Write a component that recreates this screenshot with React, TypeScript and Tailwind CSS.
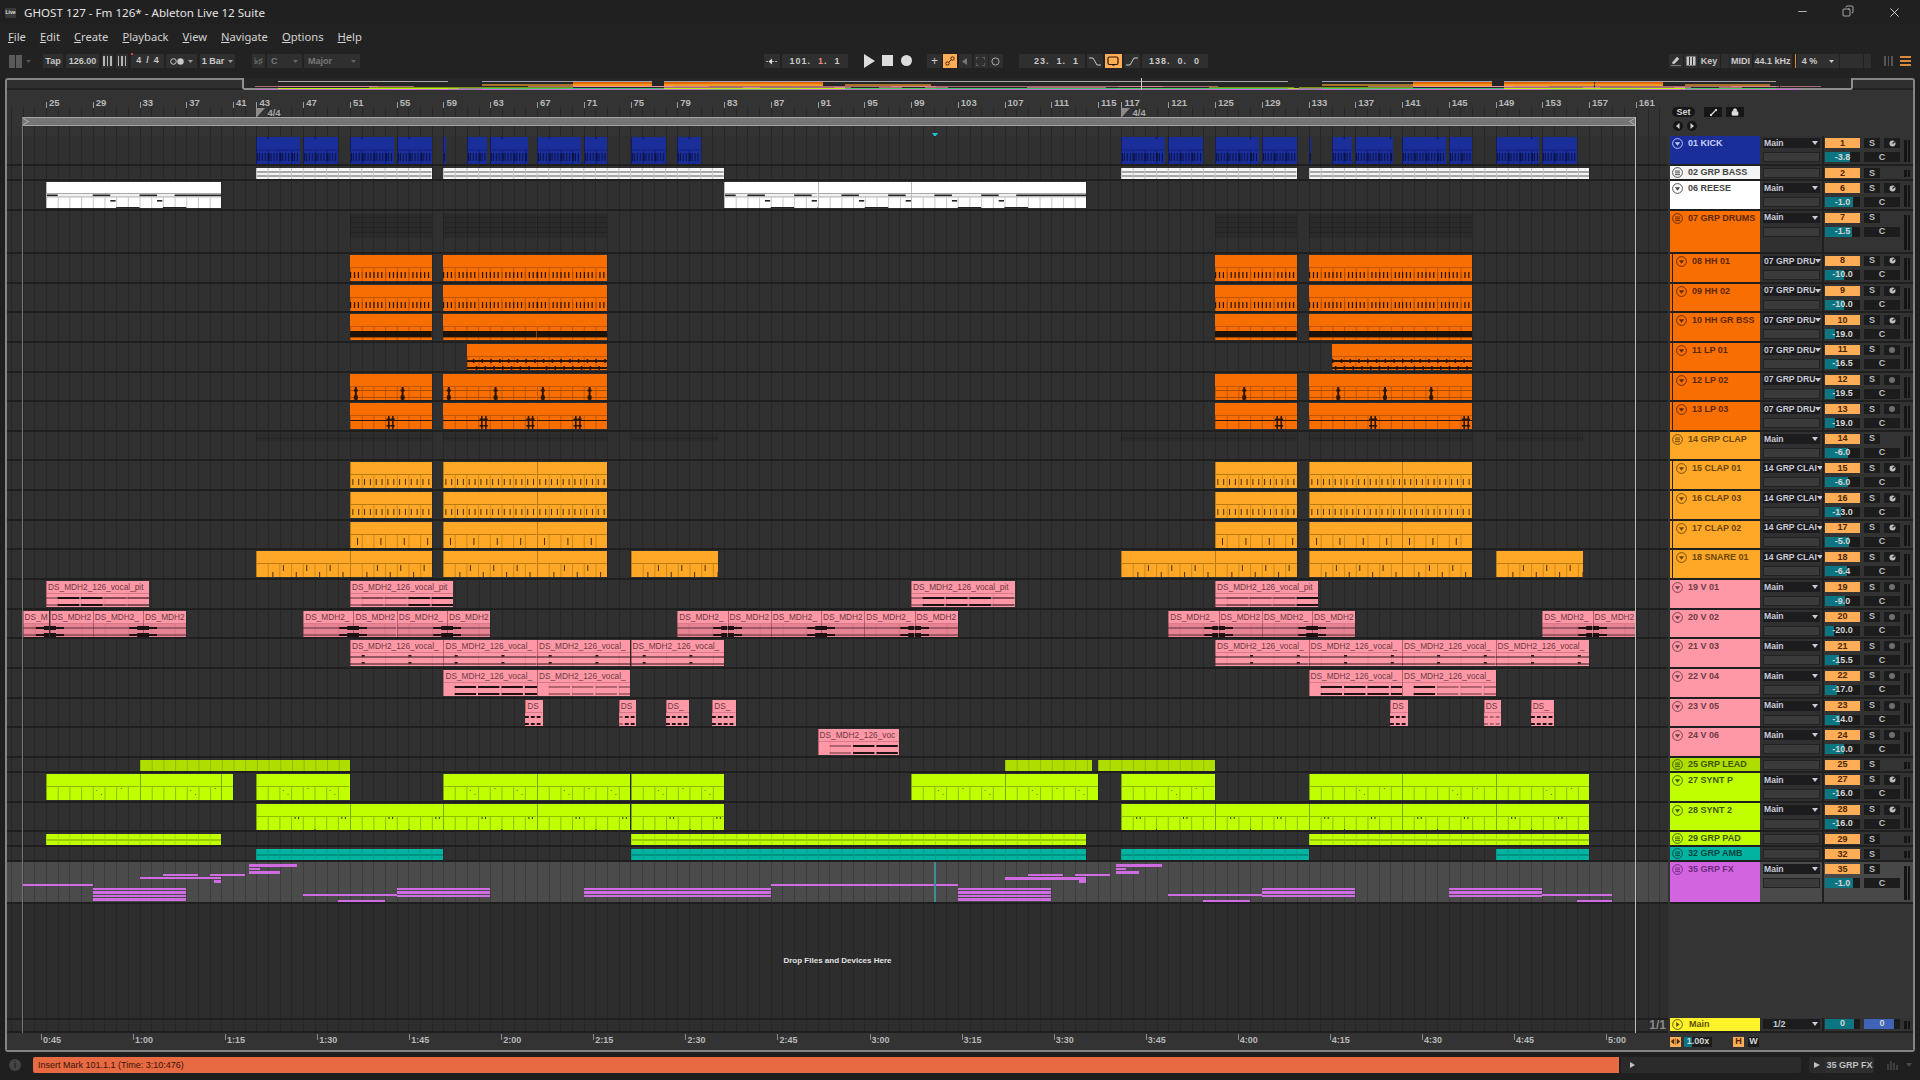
import type { ReactNode } from 'react'
import { Copy, Lock, Minus, X } from 'lucide-react'

// arrangement geometry, everything on the timeline is placed from bar numbers
const BAR = 11.69
const barX = (b: number) => 39 + (b - 25) * BAR
const miniX = (b: number) => 573 + (b - 51) * 11.35 - 7

type Seg = [number, number]
type FxClip = { a: number; b: number; y: number; n?: number }
type Track = {
  name: string
  h: number
  fill: string
  ink: string
  kind: string
  clips: Seg[]
  label?: string
  indent?: boolean
  group?: boolean
  route?: string
  vol?: number
  num: number
  arm?: 'dial' | 'dot'
  fx?: FxClip[]
}

const TALL = 29.65
const THIN = 15

const drumClips: Seg[] = [[51, 58], [59, 67], [67, 73], [125, 132], [133, 141], [141, 147]]
const ORANGE = 'bg-[#f86e00]'
const ORANGE_INK = 'text-[#5c2800]'
const AMBER = 'bg-[#ffa726]'
const AMBER_INK = 'text-[#6a4508]'
const PINK = 'bg-[#ff98a6]'
const PINK_INK = 'text-[#6e3a44]'
const LIME = 'bg-[#bfff00]'
const LIME_INK = 'text-[#3f5600]'

const fxClips: FxClip[] = [
  { a: 23, b: 29, y: 21.5 },
  { a: 29, b: 37, y: 25.5, n: 4 },
  { a: 33, b: 40, y: 14.5 },
  { a: 35, b: 38, y: 11.5 },
  { a: 39, b: 42, y: 11.5 },
  { a: 39.4, b: 40, y: 18 },
  { a: 42.4, b: 46.5, y: 2 },
  { a: 42.4, b: 43.3, y: 5.5 },
  { a: 42.4, b: 45, y: 9 },
  { a: 47, b: 55, y: 31.5 },
  { a: 50, b: 54, y: 38 },
  { a: 55, b: 63, y: 25.5, n: 3 },
  { a: 71, b: 87, y: 25.5, n: 3 },
  { a: 87, b: 103, y: 21.5 },
  { a: 103, b: 111, y: 25.5, n: 4 },
  { a: 109, b: 112, y: 11.5 },
  { a: 113, b: 116, y: 11.5 },
  { a: 107, b: 114, y: 15 },
  { a: 113.4, b: 114, y: 18 },
  { a: 116.5, b: 120.5, y: 2 },
  { a: 116.5, b: 117.4, y: 5.5 },
  { a: 116.5, b: 118.5, y: 9 },
  { a: 121, b: 129, y: 31.5 },
  { a: 124, b: 128, y: 38 },
  { a: 129, b: 137, y: 25.5, n: 3 },
  { a: 145, b: 153, y: 25.5, n: 3 },
  { a: 153, b: 159, y: 31.5 },
  { a: 156, b: 159, y: 38 },
]

const tracks: Track[] = [
  {
    name: '01 KICK', h: 30, fill: 'bg-[#1a2e99]', ink: 'text-[#c6d0f7]', kind: 'kick', num: 1, vol: -3.8, route: 'Main', arm: 'dial',
    clips: [[43, 46.75], [47, 50], [51, 54.75], [55, 58], [59, 59.25], [61, 62.75], [63, 66.25], [67, 70.75], [71, 73], [75, 78], [79, 81], [117, 120.75], [121, 124], [125, 128.75], [129, 132], [133, 133.25], [135, 136.75], [137, 140.25], [141, 144.75], [145, 147], [149, 152.75], [153, 156]],
  },
  { name: '02 GRP BASS', h: THIN, fill: 'bg-[#f4f4f4]', ink: 'text-[#444444]', kind: 'bass', num: 2, group: true, clips: [[43, 58], [59, 83], [117, 132], [133, 157]] },
  { name: '06 REESE', h: 29.6, fill: 'bg-[#ffffff]', ink: 'text-[#444444]', kind: 'reese', num: 6, vol: -1.0, route: 'Main', arm: 'dial', clips: [[25, 40], [83, 91], [91, 99], [99, 114]] },
  { name: '07 GRP DRUMS', h: 43.4, fill: ORANGE, ink: ORANGE_INK, kind: 'faint', num: 7, vol: -1.5, route: 'Main', group: true, clips: drumClips },
  { name: '08 HH 01', h: TALL, fill: ORANGE, ink: ORANGE_INK, kind: 'hh', num: 8, vol: -10.0, route: '07 GRP DRU', arm: 'dial', indent: true, clips: drumClips },
  { name: '09 HH 02', h: TALL, fill: ORANGE, ink: ORANGE_INK, kind: 'hh', num: 9, vol: -10.0, route: '07 GRP DRU', arm: 'dial', indent: true, clips: drumClips },
  { name: '10 HH GR BSS', h: TALL, fill: ORANGE, ink: ORANGE_INK, kind: 'band', num: 10, vol: -19.0, route: '07 GRP DRU', arm: 'dial', indent: true, clips: drumClips },
  { name: '11 LP 01', h: TALL, fill: ORANGE, ink: ORANGE_INK, kind: 'lp1', num: 11, vol: -16.5, route: '07 GRP DRU', arm: 'dot', indent: true, clips: [[61, 67], [67, 73], [135, 141], [141, 147]] },
  { name: '12 LP 02', h: TALL, fill: ORANGE, ink: ORANGE_INK, kind: 'lp2', num: 12, vol: -19.5, route: '07 GRP DRU', arm: 'dot', indent: true, clips: drumClips },
  { name: '13 LP 03', h: TALL, fill: ORANGE, ink: ORANGE_INK, kind: 'lp3', num: 13, vol: -19.0, route: '07 GRP DRU', arm: 'dot', indent: true, clips: drumClips },
  { name: '14 GRP CLAP', h: TALL, fill: AMBER, ink: AMBER_INK, kind: 'faint2', num: 14, vol: -6.0, route: 'Main', group: true, clips: [[43, 58], [59, 73], [75, 82.5], [117, 132], [133, 147], [149, 156.5]] },
  { name: '15 CLAP 01', h: TALL, fill: AMBER, ink: AMBER_INK, kind: 'clap', num: 15, vol: -6.0, route: '14 GRP CLAI', arm: 'dial', indent: true, clips: drumClips },
  { name: '16 CLAP 03', h: TALL, fill: AMBER, ink: AMBER_INK, kind: 'clap', num: 16, vol: -13.0, route: '14 GRP CLAI', arm: 'dial', indent: true, clips: drumClips },
  { name: '17 CLAP 02', h: TALL, fill: AMBER, ink: AMBER_INK, kind: 'clap2', num: 17, vol: -5.0, route: '14 GRP CLAI', arm: 'dial', indent: true, clips: drumClips },
  { name: '18 SNARE 01', h: TALL, fill: AMBER, ink: AMBER_INK, kind: 'snare', num: 18, vol: -6.4, route: '14 GRP CLAI', arm: 'dial', indent: true, clips: [[43, 51], [51, 58], [59, 67], [67, 73], [75, 82.5], [117, 125], [125, 132], [133, 141], [141, 147], [149, 156.5]] },
  { name: '19 V 01', h: TALL, fill: PINK, ink: PINK_INK, kind: 'v1', num: 19, vol: -9.0, route: 'Main', arm: 'dot', label: 'DS_MDH2_126_vocal_pitch', clips: [[25, 33.85], [51, 59.85], [99, 107.85], [125, 133.85]] },
  {
    name: '20 V 02', h: TALL, fill: PINK, ink: PINK_INK, kind: 'v2', num: 20, vol: -20.0, route: 'Main', arm: 'dot', label: 'DS_MDH2_126_vocal_pitch',
    clips: [[23, 25.3], [25.3, 29], [29, 33.3], [33.3, 37], [47, 51.3], [51.3, 55], [55, 59.3], [59.3, 63], [79, 83.3], [83.3, 87], [87, 91.3], [91.3, 95], [95, 99.3], [99.3, 103], [121, 125.3], [125.3, 129], [129, 133.3], [133.3, 137], [153, 157.3], [157.3, 161]],
  },
  { name: '21 V 03', h: TALL, fill: PINK, ink: PINK_INK, kind: 'v3', num: 21, vol: -15.5, route: 'Main', arm: 'dot', label: 'DS_MDH2_126_vocal_pitch', clips: [[51, 59], [59, 67], [67, 75], [75, 83], [125, 133], [133, 141], [141, 149], [149, 157]] },
  { name: '22 V 04', h: TALL, fill: PINK, ink: PINK_INK, kind: 'v4', num: 22, vol: -17.0, route: 'Main', arm: 'dot', label: 'DS_MDH2_126_vocal_hook', clips: [[59, 67], [67, 75], [133, 141], [141, 149]] },
  { name: '23 V 05', h: TALL, fill: PINK, ink: PINK_INK, kind: 'v5', num: 23, vol: -14.0, route: 'Main', arm: 'dot', label: 'DS_MDH2_126_vocal', clips: [[66, 67.5], [74, 75.5], [78, 80], [82, 84], [140, 141.5], [148, 149.5], [152, 154]] },
  { name: '24 V 06', h: TALL, fill: PINK, ink: PINK_INK, kind: 'v6', num: 24, vol: -10.0, route: 'Main', arm: 'dot', label: 'DS_MDH2_126_vocal', clips: [[91, 98]] },
  { name: '25 GRP LEAD', h: THIN, fill: 'bg-[#b0dd00]', ink: LIME_INK, kind: 'lead', num: 25, group: true, clips: [[33, 51], [107, 114.5], [115, 125]] },
  { name: '27 SYNT P', h: TALL, fill: LIME, ink: LIME_INK, kind: 'synth', num: 27, vol: -16.0, route: 'Main', arm: 'dial', clips: [[25, 33], [33, 40], [40, 41], [43, 51], [59, 67], [67, 75], [75, 83], [99, 107], [107, 115], [117, 125], [133, 141], [141, 149], [149, 157]] },
  { name: '28 SYNT 2', h: TALL, fill: LIME, ink: LIME_INK, kind: 'synth2', num: 28, vol: -16.0, route: 'Main', arm: 'dial', clips: [[43, 51], [51, 59], [59, 67], [67, 75], [75, 83], [117, 125], [125, 133], [133, 141], [141, 149], [149, 157]] },
  { name: '29 GRP PAD', h: THIN, fill: LIME, ink: LIME_INK, kind: 'pad', num: 29, group: true, clips: [[25, 40], [75, 114], [133, 157]] },
  { name: '32 GRP AMB', h: THIN, fill: 'bg-[#00b3a0]', ink: 'text-[#00443e]', kind: 'amb', num: 32, group: true, clips: [[43, 59], [75, 114], [117, 133], [149, 157]] },
  { name: '35 GRP FX', h: 42, fill: 'bg-[#d264e0]', ink: 'text-[#6e2a7c]', kind: 'fx', num: 35, vol: -1.0, route: 'Main', group: true, clips: [], fx: fxClips },
]

const topLabels: number[] = [25, 29, 33, 37, 41]
for (let b = 43; b <= 115; b += 4) topLabels.push(b)
for (let b = 117; b <= 161; b += 4) topLabels.push(b)

const timeLabels: string[] = []
for (let s = 45; s <= 300; s += 15) timeLabels.push(`${Math.floor(s / 60)}:${String(s % 60).padStart(2, '0')}`)

// how much of a clip name fits, capitals are wider than the rest at this size
function fitLabel(label: string, width: number) {
  let used = 2
  let out = ''
  for (const ch of label) {
    used += /[A-Z]/.test(ch) ? 6.3 : ch === 'l' || ch === 'i' || ch === 't' ? 2.4 : 4.6
    if (used > width) break
    out += ch
  }
  return out
}

function Wave({ kind, a, b, h }: { kind: string; a: number; b: number; h: number }) {
  const w = (b - a) * BAR
  const out: ReactNode[] = []
  const R = (x: number, y: number, rw: number, rh: number, c: string) => out.push(<rect key={out.length} x={x} y={y} width={rw} height={rh} fill={c} />)
  const at = (bar: number) => (bar - a) * BAR
  // loop over positions with a step, aligned to the whole song, not the clip
  const each = (step: number, fn: (bar: number) => void) => {
    for (let t = Math.ceil(a / step) * step; t < b; t += step) fn(t)
  }
  const grid = (y: number, c: string, step = 1) => each(step, (t) => R(at(t), y, 1, h - y, c))
  const edge = (c: string) => R(0, 0, 1, h, c)

  if (kind === 'kick') {
    R(0, 12.5, w, 1, '#141f7c')
    grid(13, '#131f78')
    each(0.25, (t) => R(at(t), 16, t % 1 === 0 ? 2 : 1, 8, '#0b1245'))
    each(4, (t) => R(at(t), 0, 1, 2, '#0b1245'))
    edge('#101a66')
  } else if (kind === 'bass') {
    R(0, 3.5, w, 1, '#5a5a5a')
    R(0, 7.5, w, 1, '#5a5a5a')
    grid(0, '#c4c4c4')
  } else if (kind === 'reese') {
    R(0, 11, w, 1, '#a9a9a9')
    R(0, 12, w, 2.4, '#f2f2f2')
    R(0, 14.4, w, 1, '#a9a9a9')
    grid(15, '#c8c8c8')
    each(4, (t) => {
      if ((t < 33 && t >= 25) || (t >= 83 && t < 107)) {
        R(at(t + 1), 12.5, 1.5 * BAR, 1.6, '#222222')
        R(at(t + 2.5), 18, 0.45 * BAR, 1.6, '#222222')
        R(at(t + 3), 25, 2 * BAR, 2, '#222222')
      } else {
        R(at(t), 12.5, 4 * BAR, 1.6, '#222222')
      }
    })
    if (a === 25 || a === 83) R(0, 12.5, BAR, 1.6, '#222222')
    edge('#bbbbbb')
  } else if (kind === 'faint' || kind === 'faint2') {
    const fh = kind === 'faint' ? 24 : 8
    R(0, kind === 'faint' ? 2 : 0, w, fh, kind === 'faint' ? 'rgba(0,0,0,0.12)' : 'rgba(0,0,0,0.07)')
    for (let y = 5; y < fh; y += 5) R(0, y, w, 1, 'rgba(0,0,0,0.14)')
  } else if (['hh', 'band', 'lp1', 'lp2', 'lp3'].includes(kind)) {
    R(0, 12, w, 1, '#c05700')
    grid(13, '#c05700')
    if (kind === 'hh') {
      each(1 / 3, (t) => R(at(t), 17, 1.2, 6, Math.round(t * 3) % 6 === 0 ? '#a84a00' : '#241200'))
    }
    if (kind === 'band') R(0, 17, w, 6.4, '#1c1209')
    if (kind === 'lp1') {
      R(0, 16, w, 2, '#2c1603')
      R(0, 23, w, 2, '#2c1603')
      each(0.75, (t) => {
        R(at(t), 15, 1.5, 4, '#241202')
        R(at(t + 0.25), 22, 1.5, 4, '#241202')
      })
    }
    if (kind === 'lp2') {
      R(0, 16, w, 1, '#a84c00')
      R(0, 23, w, 1, '#a84c00')
      each(4, (t) => {
        const x = at(t - 0.5)
        R(x - 1, 13, 2, 14, '#2a1603')
        R(x - 2, 15.5, 4, 2, '#2a1603')
        R(x - 2, 21.5, 4, 4, '#2a1603')
      })
    }
    if (kind === 'lp3') {
      R(0, 17, w, 1, '#2a1603')
      each(4, (t) => {
        for (const o of [2.25, 2.6]) {
          R(at(t + o), 13, 1.6, 13, '#2a1603')
          R(at(t + o - 0.12), 15.5, 4, 1.6, '#2a1603')
          R(at(t + o - 0.12), 22, 4, 1.6, '#2a1603')
        }
      })
    }
  } else if (['clap', 'clap2', 'snare'].includes(kind)) {
    R(0, 12, w, 1, '#b97a10')
    grid(13, '#c98a1c')
    if (kind === 'clap') each(0.5, (t) => R(at(t + 0.2), 17, 1, 6, '#4a2f00'))
    if (kind === 'clap2') each(1, (t) => t % 2 === 1 && R(at(t + 0.6), 16, 1, 7, '#4a2f00'))
    if (kind === 'snare')
      each(2, (t) => {
        R(at(t + 1.3), 14, 1, 6, '#4a2f00')
        R(at(t + 0.4), 21, 1, 6, '#4a2f00')
      })
    edge('#b97a10')
  } else if (kind.startsWith('v')) {
    R(0, 12, w, 1, '#d87a8a')
    edge('#b8606e')
    grid(13, '#ec8a99', 2)
    const y1 = 16
    const y2 = 23
    if (kind === 'v2') {
      R(0, 13, w, 14, 'rgba(110,40,55,0.18)')
      for (const y of [y1, y2]) {
        R(0, y + 0.5, w, 1, '#603038')
        if (a % 1 !== 0) {
          R(0, y, 14, 2, '#1f1013')
          R(0, y - 1, 6, 4, '#1f1013')
        }
        if (b % 1 !== 0) {
          R(w - 14, y, 14, 2, '#1f1013')
          R(w - 6, y - 1, 6, 4, '#1f1013')
        }
      }
    } else if (kind === 'v3') {
      R(0, y1 + 0.5, w, 1, '#2a1519')
      R(0, y2 + 0.5, w, 1, '#2a1519')
      each(4, (t) => {
        R(at(t), y1 - 1, 3, 1.6, '#2a1519')
        R(at(t), y2 - 1, 3, 1.6, '#2a1519')
      })
    } else {
      const span = kind === 'v5' ? 0.5 : 2
      if (kind === 'v1') {
        R(0, y1 + 0.5, w, 1, '#603038')
        R(0, y2 + 0.5, w, 1, '#603038')
      }
      each(span, (t) => {
        const seg = Math.sin(t * 12.9) > -0.4
        if (kind === 'v4' && Math.round(t) % 4 === 3) return
        if (seg) {
          R(at(t), y1, span * BAR - 2, 2, '#1f1013')
          R(at(t), y2, span * BAR - 2, 2, '#1f1013')
        } else {
          R(at(t), y1 + 0.5, span * BAR - 2, 1, '#603038')
          R(at(t), y2 + 0.5, span * BAR - 2, 1, '#603038')
        }
      })
    }
  } else if (kind === 'lead') {
    grid(0, '#92bd00')
  } else if (kind === 'synth' || kind === 'synth2') {
    R(0, 12, w, 1, '#8fbe00')
    grid(13, '#8fbe00')
    edge('#7ea800')
    if (kind === 'synth') each(4, (t) => {
      R(at(t + 1.3), 16, 1, 1, '#55720a')
      R(at(t + 1.7), 20, 1, 1, '#55720a')
      R(at(t + 3.4), 14, 1, 1, '#55720a')
    })
    else each(1, (t) => {
      if (t % 4 === 2) R(at(t + 0.3), 13, 1, 2, '#2d3b00')
      if (t % 4 === 2) R(at(t + 0.6), 13, 1, 2, '#2d3b00')
      if (t % 8 === 0) R(at(t), 25, 1, 2, '#2d3b00')
    })
  } else if (kind === 'pad') {
    R(0, 5.5, w, 1, '#7b9c00')
    grid(0, '#a4d800')
  } else if (kind === 'amb') {
    R(0, 5.5, w, 1, '#00746a')
    grid(0, '#009f8e')
  }

  return (
    <svg className="absolute left-0 top-0" width={w} height={h}>
      {out}
    </svg>
  )
}

function Clip({ t, seg }: { t: Track; seg: Seg }) {
  const [a, b] = seg
  const faint = t.kind === 'faint' || t.kind === 'faint2'
  const inner = t.kind === 'pad' || t.kind === 'amb' || t.kind === 'lead' ? 11 : t.kind === 'bass' ? 11 : Math.floor(t.h) - 3
  const width = (b - a) * BAR
  const shown = t.label ? fitLabel(t.label, width) : ''
  return (
    <div
      className={`absolute overflow-hidden ${faint ? '' : t.fill}`}
      style={{ left: barX(a), width, top: t.h === THIN ? 2 : 1, height: faint ? t.h - 3 : inner }}
    >
      <Wave kind={t.kind} a={a} b={b} h={inner} />
      {shown && (
        <span className="relative block whitespace-nowrap pl-[2px] pt-[1px] text-[8.3px] leading-[11px] text-[#6b3a44]">{shown}</span>
      )}
    </div>
  )
}

function FxStrip({ c }: { c: FxClip }) {
  const rows = Array.from({ length: c.n ?? 1 })
  return (
    <div className="absolute flex flex-col gap-[1px]" style={{ left: barX(c.a), width: (c.b - c.a) * BAR, top: c.y }}>
      {rows.map((_, i) => (
        <div key={i} className="h-[2.5px] bg-[#cf6ce2]" />
      ))}
    </div>
  )
}

function FoldIcon({ group, play }: { group?: boolean; play?: boolean }) {
  return (
    <svg width="11" height="11" viewBox="0 0 11 11" className="shrink-0">
      <circle cx="5.5" cy="5.5" r="4.9" fill="none" stroke="currentColor" strokeWidth="0.9" />
      {group ? (
        <path d="M3 4h5M3 5.8h5M3 7.6h5" stroke="currentColor" strokeWidth="0.9" />
      ) : play ? (
        <path d="M4.2 3l3.4 2.5L4.2 8z" fill="currentColor" />
      ) : (
        <path d="M2.9 4.2h5.2L5.5 7.8z" fill="currentColor" />
      )}
    </svg>
  )
}

function ArmButton({ kind }: { kind?: 'dial' | 'dot' }) {
  if (!kind) return <div className="h-[10px] w-[16px]" />
  return (
    <div className="flex h-[10px] w-[16px] items-center justify-center bg-[#1c1c1c]">
      {kind === 'dial' ? (
        <svg width="7" height="7" viewBox="0 0 7 7">
          <circle cx="3.5" cy="3.5" r="3" fill="#bdbdbd" />
          <path d="M3.5 3.5L6 1.6" stroke="#222" strokeWidth="1.2" />
        </svg>
      ) : (
        <div className="h-[6px] w-[6px] rounded-full bg-[#6f6f6f]" />
      )}
    </div>
  )
}

function VolBar({ value, width = 'w-[35px]' }: { value: number; width?: string }) {
  const pct = Math.max(20, 82 + value * 2.8)
  return (
    <div className={`relative flex h-[10px] items-center justify-center bg-[#1b1b1b] text-[9px] font-bold leading-none text-[#d6d6d6] ${width}`}>
      <div className="absolute inset-y-0 left-0 bg-[#0b7582]" style={{ width: `${pct}%` }} />
      <span className="relative">{value.toFixed(1)}</span>
    </div>
  )
}

function Meter() {
  return (
    <div className="ml-[4px] mb-[2px] mt-[2px] flex w-[6px] gap-[1px]">
      <div className="flex-1 bg-[#141414]" />
      <div className="flex-1 bg-[#141414]" />
    </div>
  )
}

function Header({ t }: { t: Track }) {
  const selected = t.kind === 'fx'
  const tall = t.h !== THIN
  return (
    <>
      <div className={`ml-[2px] flex w-[90px] border-b-2 border-[#1f1f1f] ${t.indent ? 'bg-[#202020]' : ''}`}>
        {t.indent && <div className={`mr-[1px] w-[2px] ${t.fill}`} />}
        <div className={`flex flex-1 gap-[5px] ${t.fill} ${t.ink} ${tall ? 'pt-[2px]' : 'items-center'} ${t.indent ? 'pl-[3px]' : 'pl-[2px]'}`}>
          <FoldIcon group={t.group} />
          <span className="whitespace-nowrap text-[9px] font-bold leading-[11px]">{t.name}</span>
        </div>
      </div>
      <div className={`flex w-[62px] flex-col gap-[4px] border-b-2 border-[#1f1f1f] pl-[3px] pt-[2px] ${selected ? 'bg-[#4a4a4a]' : 'bg-[#303030]'}`}>
        {t.route && (
          <div className="flex h-[10px] w-[57px] items-center justify-between bg-[#1c1c1e] pl-[1px] pr-[2px] text-[8.6px] font-bold leading-none text-[#c9cbd8]">
            <span className="whitespace-nowrap">{t.route}</span>
            <svg width="6" height="4" viewBox="0 0 6 4" className="shrink-0"><path d="M0 0h6L3 4z" fill="#c9cbd8" /></svg>
          </div>
        )}
        <div className="h-[10px] w-[57px] border border-[#222222] bg-[#3a3a3a]" />
      </div>
      <div className={`flex w-[91px] border-b-2 border-l-2 border-[#1f1f1f] pl-[1px] pt-[2px] ${selected ? 'bg-[#484848]' : 'bg-[#333333]'}`}>
        <div className="flex w-[75px] flex-col gap-[4px]">
          <div className="flex gap-[4px]">
            <div className="flex h-[10px] w-[35px] items-center justify-center bg-[#ffad56] text-[9px] font-bold leading-none text-[#4a2600]">{t.num}</div>
            <div className="flex h-[10px] w-[16px] items-center justify-center bg-[#1c1c1c] text-[9px] font-bold leading-none text-[#bdbdbd]">S</div>
            <ArmButton kind={t.arm} />
          </div>
          {t.vol !== undefined && (
            <div className="flex gap-[4px]">
              <VolBar value={t.vol} />
              <div className="flex h-[10px] w-[36px] items-center justify-center bg-[#1c1c1c] text-[9px] font-bold leading-none text-[#bdbdbd]">C</div>
            </div>
          )}
        </div>
        <Meter />
      </div>
    </>
  )
}

function TrackRow({ t }: { t: Track }) {
  const selected = t.kind === 'fx'
  return (
    <div className="flex" style={{ height: t.h }}>
      <div
        className={`relative w-[1661px] overflow-hidden border-b-2 border-[#1f1f1f] ${
          selected
            ? 'bg-[#4b4b4b] bg-[repeating-linear-gradient(90deg,transparent_0,transparent_3.93px,#3c3c3c_3.93px,#3c3c3c_4.93px,transparent_4.93px,transparent_11.69px)]'
            : 'bg-[#303030] bg-[repeating-linear-gradient(90deg,transparent_0,transparent_3.93px,#272727_3.93px,#272727_4.93px,transparent_4.93px,transparent_11.69px)]'
        }`}
      >
        {t.clips.map((c) => (
          <Clip key={c[0]} t={t} seg={c} />
        ))}
        {t.fx?.map((c) => (
          <FxStrip key={`${c.a}-${c.y}`} c={c} />
        ))}
        {selected && <div className="absolute inset-y-0 left-[926.7px] w-[2px] bg-[#3d8f96]" />}
      </div>
      <Header t={t} />
    </div>
  )
}

function Overview() {
  let y = 0
  const rows = tracks.map((t) => {
    const top = 1 + (y / 768) * 8
    y += t.h
    return { t, top }
  })
  return (
    <div className="relative h-[10px] shrink-0 border-b-2 border-[#222222] bg-[#2f2f2f]">
      <div className="absolute -top-[2px] left-[234.5px] h-[12px] w-[1611px] rounded-b-[3px] border-2 border-t-0 border-[#8f8f8f] bg-[#262626]" />
      {rows.map(({ t, top }) =>
        (t.fx ? t.fx.map((c) => [c.a, c.b] as Seg) : t.clips).map((c, i) => (
          <div
            key={`${t.num}-${i}`}
            className={`absolute h-[1px] opacity-60 ${t.fill}`}
            style={{ left: miniX(c[0]), width: (c[1] - c[0]) * 11.35, top }}
          />
        )),
      )}
      <div className="absolute -top-[2px] left-[1134px] h-[12px] w-[1px] bg-[#d0d0d0]" />
    </div>
  )
}

function TimeSig({ bar }: { bar: number }) {
  return (
    <div className="absolute top-0 flex items-center gap-[2px]" style={{ left: barX(bar) }}>
      <svg width="9" height="10" viewBox="0 0 9 10"><path d="M0 0h9L0 10z" fill="#8c8c8c" /></svg>
      <span className="text-[9.5px] font-bold leading-[10px] text-[#a8a8a8]">4/4</span>
    </div>
  )
}

function TopRuler() {
  return (
    <div className="flex h-[46px] shrink-0 bg-[#333333]">
      <div className="flex w-[1661px] flex-col">
        <div className="relative h-[18px]">
          {topLabels.map((b) => (
            <div key={b} className="absolute bottom-0 flex items-end" style={{ left: barX(b) }}>
              <div className="h-[6px] w-[1px] bg-[#9a9a9a]" />
              <span className="-mb-[1px] ml-[2px] text-[9.5px] font-bold leading-[12px] text-[#b8b8b8]">{b}</span>
            </div>
          ))}
        </div>
        <div className="relative flex-1 bg-[repeating-linear-gradient(90deg,transparent_0,transparent_3.93px,#272727_3.93px,#272727_4.93px,transparent_4.93px,transparent_11.69px)]">
          <TimeSig bar={43} />
          <TimeSig bar={117} />
          <div className="absolute left-[14.5px] top-[9px] h-[9px] w-[1614px] border border-[#a4a4a4] bg-[#757575]">
            <svg className="absolute left-0 top-0" width="7" height="7" viewBox="0 0 7 7"><path d="M.5.5l5 3-5 3" fill="none" stroke="#b4b4b4" /></svg>
            <svg className="absolute right-0 top-0" width="7" height="7" viewBox="0 0 7 7"><path d="M6.5.5l-5 3 5 3" fill="none" stroke="#b4b4b4" /></svg>
          </div>
          <div className="absolute -bottom-[1px] left-[924.5px] h-0 w-0 border-x-[3px] border-t-[4px] border-x-transparent border-t-[#1ec5d6]" />
        </div>
      </div>
      <div className="ml-[4px] flex flex-1 flex-col gap-[4px] pt-[17px]">
        <div className="flex items-center">
          <div className="flex h-[10px] w-[23px] items-center justify-center rounded-full bg-[#161616] text-[9px] font-bold leading-none text-[#d8d8d8]">Set</div>
          <div className="ml-[9px] flex h-[10px] w-[18px] items-center justify-center bg-[#161616]">
            <svg width="7" height="7" viewBox="0 0 7 7"><path d="M1 6l5-5" stroke="#d8d8d8" strokeWidth="1.2" /><path d="M0 5h2v2H0zM5 0h2v2H5z" fill="#d8d8d8" /></svg>
          </div>
          <div className="ml-[4px] flex h-[10px] w-[18px] items-center justify-center bg-[#161616]">
            <Lock size={8} color="#e0e0e0" fill="#e0e0e0" />
          </div>
        </div>
        <div className="flex gap-[4px] pl-[1px]">
          {['M5.5 1L2 4l3.5 3', 'M2.5 1L6 4 2.5 7'].map((d) => (
            <div key={d} className="flex h-[10px] w-[10px] items-center justify-center rounded-full bg-[#161616]">
              <svg width="8" height="8" viewBox="0 0 8 8"><path d={d} fill="#d0d0d0" /></svg>
            </div>
          ))}
        </div>
      </div>
    </div>
  )
}

function MainRow() {
  return (
    <div className="flex h-[15px] shrink-0">
      <div className="relative w-[1661px] border-b-2 border-t-2 border-[#1f1f1f] bg-[#2e2e2e] bg-[repeating-linear-gradient(90deg,transparent_0,transparent_3.93px,#272727_3.93px,#272727_4.93px,transparent_4.93px,transparent_11.69px)]">
        <span className="absolute -top-[3px] right-[2px] font-['Liberation_Sans'] text-[12px] font-bold leading-[16px] text-[#8a8a8a]">1/1</span>
      </div>
      <div className="ml-[2px] flex w-[90px] items-center gap-[6px] border-b-2 bg-[#fff22b] pl-[2px] text-[#5e5200] border-[#1f1f1f]">
        <FoldIcon play />
        <span className="text-[9px] font-bold leading-none">Main</span>
      </div>
      <div className="flex w-[62px] items-start border-b-2 border-[#1f1f1f] bg-[#303030] pl-[3px] pt-[1px]">
        <div className="flex h-[10px] w-[57px] items-center justify-between bg-[#1c1c1e] pl-[4px] pr-[2px] text-[9px] font-bold leading-none text-[#c9cbd8]">
          <span className="pl-[6px]">1/2</span>
          <svg width="6" height="4" viewBox="0 0 6 4"><path d="M0 0h6L3 4z" fill="#c9cbd8" /></svg>
        </div>
      </div>
      <div className="flex w-[91px] border-b-2 border-l-2 border-[#1f1f1f] bg-[#333333] pl-[1px] pt-[1px]">
        <div className="relative flex h-[10px] w-[35px] items-center justify-center bg-[#1b1b1b] text-[9px] font-bold text-[#d6d6d6]">
          <div className="absolute inset-y-0 left-0 w-[82%] bg-[#0b7582]" />
          <span className="relative">0</span>
        </div>
        <div className="relative ml-[4px] flex h-[10px] w-[36px] items-center justify-center bg-[#1b1b1b] text-[9px] font-bold text-[#d6d6d6]">
          <div className="absolute inset-y-0 left-0 w-[84%] bg-[#3f63b8]" />
          <span className="relative">0</span>
        </div>
        <Meter />
      </div>
    </div>
  )
}

function TimeRuler() {
  return (
    <div className="flex h-[17px] shrink-0 bg-[#333333]">
      <div className="relative w-[1661px]">
        {timeLabels.map((l, i) => (
          <div key={l} className="absolute top-0 flex items-start" style={{ left: 34 + i * 92.06 }}>
            <div className="mt-[1px] h-[6px] w-[1px] bg-[#8c8c8c]" />
            <span className="ml-[1px] mt-[2px] text-[9px] font-bold leading-[11px] text-[#b8b8b8]">{l}</span>
          </div>
        ))}
      </div>
      <div className="ml-[2px] flex flex-1 items-center">
        <div className="flex h-[10px] w-[11px] items-center justify-center bg-[#ffad56]">
          <svg width="9" height="7" viewBox="0 0 9 7"><path d="M3 1v5L0 3.5zM6 1v5l3-2.5zM4.5 0v7" fill="#4a2600" stroke="#4a2600" strokeWidth=".4" /></svg>
        </div>
        <div className="relative ml-[3px] flex h-[10px] w-[28px] items-center justify-center bg-[#1b1b1b] text-[9px] font-bold leading-none text-[#d6d6d6]">
          <div className="absolute inset-y-0 left-0 w-[30%] bg-[#0b7582]" />
          <span className="relative">1.00x</span>
        </div>
        <div className="ml-[21px] flex h-[10px] w-[11px] items-center justify-center bg-[#ffad56] text-[9px] font-bold leading-none text-[#4a2600]">H</div>
        <div className="ml-[4px] flex h-[10px] w-[11px] items-center justify-center bg-[#1b1b1b] text-[9px] font-bold leading-none text-[#d6d6d6]">W</div>
      </div>
    </div>
  )
}

function Cell({ w, on, children, dim, gap = 'ml-[2px]' }: { w: string; on?: boolean; dim?: boolean; gap?: string; children?: ReactNode }) {
  return (
    <div
      className={`flex h-[14px] shrink-0 items-center justify-center whitespace-nowrap text-[9px] font-bold leading-none ${w} ${gap} ${
        on ? 'bg-[#ffad56] text-[#4a2600]' : 'bg-[#2f2f2f]'
      } ${dim ? 'text-[#777777]' : on ? '' : 'text-[#c9c9c9]'}`}
    >
      {children}
    </div>
  )
}

const Tri = ({ c = '#999999' }: { c?: string }) => (
  <svg width="5" height="3" viewBox="0 0 5 3" className="ml-[4px]"><path d="M0 0h5L2.5 3z" fill={c} /></svg>
)
const Bars = ({ n = 3, c = '#b5b5b5' }: { n?: number; c?: string }) => (
  <div className="flex gap-[2px]">
    {Array.from({ length: n }).map((_, i) => (
      <div key={i} className="h-[10px] w-[1.5px]" style={{ background: c }} />
    ))}
  </div>
)

function Toolbar() {
  return (
    <div className="flex h-[29px] shrink-0 items-start bg-[#222222] pt-[5px]">
      <div className="ml-[9px] flex h-[14px] items-center">
        <div className="h-[13px] w-[6px] bg-[#5a5a5a]" />
        <div className="ml-[1px] h-[13px] w-[6px] bg-[#5a5a5a]" />
        <Tri c="#555555" />
      </div>
      <Cell w="w-[20px]" gap="ml-[12px]">Tap</Cell>
      <Cell w="w-[33px]" gap="ml-[3px]">126.00</Cell>
      <Cell w="w-[11px]" gap="ml-[3px]"><Bars /></Cell>
      <Cell w="w-[12px]" gap="ml-[3px]"><Bars /></Cell>
      <div className="relative ml-[3px] flex h-[14px] w-[33px] items-center justify-center whitespace-pre bg-[#2f2f2f] text-[9px] font-bold text-[#c9c9c9]">
        <div className="absolute -top-[1px] left-0 h-[2px] w-[2px] bg-[#e04040]" />
        {'4  /  4'}
      </div>
      <Cell w="w-[31px]">
        <svg width="14" height="7" viewBox="0 0 14 7"><circle cx="3.5" cy="3.5" r="2.8" fill="none" stroke="#c9c9c9" /><circle cx="10.5" cy="3.5" r="3.2" fill="#c9c9c9" /></svg>
        <Tri />
      </Cell>
      <Cell w="w-[35px]" gap="ml-[3px]">1 Bar<Tri /></Cell>
      <Cell w="w-[13px]" dim gap="ml-[17px]">♭♯</Cell>
      <Cell w="w-[35px]" dim>
        <span className="mr-auto pl-[4px]">C</span><span className="pr-[4px]"><Tri c="#666666" /></span>
      </Cell>
      <Cell w="w-[56px]" dim>
        <span className="mr-auto pl-[4px]">Major</span><span className="pr-[4px]"><Tri c="#666666" /></span>
      </Cell>

      <Cell w="w-[16px]" gap="ml-[404px]">
        <svg width="12" height="7" viewBox="0 0 12 7"><path d="M0 3.5h12" stroke="#aaa" strokeDasharray="2 1" /><path d="M6 0.5v6L2.5 3.5z" fill="#ddd" /></svg>
      </Cell>
      <Cell w="w-[66px]"><span className="tracking-[1px]">101.&nbsp; <span className="text-[#e88a80]">1</span>.&nbsp; 1</span></Cell>
      <svg width="11" height="14" viewBox="0 0 11 14" className="ml-[16px]"><path d="M0 0l11 7-11 7z" fill="#dcdcdc" /></svg>
      <div className="ml-[7px] mt-[1px] h-[11px] w-[11px] bg-[#dcdcdc]" />
      <div className="ml-[8px] mt-[1px] h-[11px] w-[11px] rounded-full bg-[#dcdcdc]" />
      <Cell w="w-[15px]" gap="ml-[15px]"><span className="text-[12px] font-normal">+</span></Cell>
      <Cell w="w-[14px]" on gap="ml-[0.5px]">
        <svg width="10" height="10" viewBox="0 0 10 10"><circle cx="2.5" cy="7.5" r="1.7" fill="none" stroke="#4a2600" /><circle cx="7.5" cy="2.5" r="1.7" fill="none" stroke="#4a2600" /><path d="M3.5 6.5l3-3" stroke="#4a2600" /></svg>
      </Cell>
      <Cell w="w-[13px]">
        <svg width="8" height="7" viewBox="0 0 8 7"><path d="M6 0v7L1 3.5z" fill="#777" /></svg>
      </Cell>
      <Cell w="w-[14px]">
        <svg width="9" height="9" viewBox="0 0 9 9"><path d="M0 3V0h3M6 0h3v3M9 6v3H6M3 9H0V6" fill="none" stroke="#777" /></svg>
      </Cell>
      <Cell w="w-[14px]" gap="ml-[1px]">
        <svg width="9" height="9" viewBox="0 0 9 9"><circle cx="4.5" cy="4.5" r="3.6" fill="none" stroke="#aaa" /></svg>
      </Cell>
      <Cell w="w-[66px]" gap="ml-[16px]"><span className="pl-[10px] tracking-[1px]">23.&nbsp; 1.&nbsp; 1</span></Cell>
      <Cell w="w-[16px]">
        <svg width="12" height="9" viewBox="0 0 12 9"><path d="M0 1h4l4 7h4" fill="none" stroke="#c9c9c9" /></svg>
      </Cell>
      <Cell w="w-[17px]" on>
        <svg width="12" height="10" viewBox="0 0 12 10"><rect x="1" y="1" width="10" height="7.5" rx="1.5" fill="none" stroke="#2a1600" strokeWidth="1.2" /><path d="M5 8.5h3v1H5z" fill="#2a1600" /></svg>
      </Cell>
      <Cell w="w-[16px]">
        <svg width="12" height="9" viewBox="0 0 12 9"><path d="M0 8h4l4-7h4" fill="none" stroke="#c9c9c9" /></svg>
      </Cell>
      <Cell w="w-[66px]"><span className="tracking-[1px]">138.&nbsp; 0.&nbsp; 0</span></Cell>

      <Cell w="w-[14px]" gap="ml-[461px]">
        <svg width="10" height="10" viewBox="0 0 10 10"><path d="M1 7l5-6 2 2-5 5zM0 9.5h10" fill="#c9c9c9" stroke="#c9c9c9" strokeWidth=".5" /></svg>
      </Cell>
      <Cell w="w-[14px]" gap="ml-[1px]">
        <svg width="10" height="10" viewBox="0 0 10 10"><rect x=".5" y=".5" width="9" height="9" fill="#c9c9c9" /><path d="M3.5 1v8M6.5 1v8" stroke="#2f2f2f" /></svg>
      </Cell>
      <Cell w="w-[21px]" gap="ml-[1px]">Key</Cell>
      <Cell w="w-[8px]" gap="ml-[1px]" />
      <Cell w="w-[22px]" gap="ml-[1px]">MIDI</Cell>
      <Cell w="w-[38px]">44.1 kHz</Cell>
      <div className="ml-[3px] h-[14px] w-[1.5px] bg-[#d98a3a]" />
      <Cell w="w-[42px]" gap="ml-[1px]"><span className="pr-[8px]">4 %</span><Tri c="#c9c9c9" /></Cell>
      <Cell w="w-[23px]" gap="ml-[1px]" />
      <Cell w="w-[7px]" gap="ml-[1px]" />
      <div className="ml-[13px] flex h-[14px] items-center"><Bars c="#555555" /></div>
      <div className="ml-[7px] flex h-[14px] w-[11px] flex-col justify-center gap-[2px]">
        <div className="h-[2px] bg-[#d98a3a]" />
        <div className="h-[2px] bg-[#d98a3a]" />
        <div className="h-[2px] bg-[#d98a3a]" />
      </div>
    </div>
  )
}

const MENU = [['F', 'ile'], ['E', 'dit'], ['C', 'reate'], ['P', 'layback'], ['V', 'iew'], ['N', 'avigate'], ['O', 'ptions'], ['H', 'elp']]

export default function App() {
  return (
    <div className="flex h-[1080px] w-[1920px] flex-col overflow-hidden bg-[#1f1f1f] font-['Liberation_Sans',sans-serif]">
      {/* title bar */}
      <div className="flex h-[25px] shrink-0 items-center bg-[#202020] pl-[5px] font-['Noto_Sans',sans-serif] text-[11.6px] text-[#e4e4e4]">
        <div className="flex h-[10px] w-[11px] items-center justify-center bg-[#3a3a3a] font-['Liberation_Sans'] text-[5px] font-bold text-[#e0e0e0]">Live</div>
        <span className="ml-[8px] whitespace-nowrap">GHOST 127 - Fm 126* - Ableton Live 12 Suite</span>
        <div className="ml-auto flex text-[#f0f0f0]">
          <div className="flex w-[46px] justify-center"><Minus size={13} strokeWidth={1.3} /></div>
          <div className="flex w-[46px] justify-center"><Copy size={12} strokeWidth={1.3} className="-scale-x-100" /></div>
          <div className="mr-[3px] flex w-[46px] justify-center"><X size={15} strokeWidth={1.3} /></div>
        </div>
      </div>
      {/* menu */}
      <div className="flex h-[24px] shrink-0 items-center gap-[14px] bg-[#222222] pl-[8px] font-['Noto_Sans',sans-serif] text-[11.2px] text-[#d4d4d4]">
        {MENU.map(([a, b]) => (
          <span key={a + b}><span className="underline">{a}</span>{b}</span>
        ))}
      </div>
      <Toolbar />
      {/* arrangement frame */}
      <div className="relative ml-[5px] flex h-[974px] w-[1910px] shrink-0 flex-col rounded-[3px] border-2 border-[#858585] bg-[#333333]">
        <Overview />
        <TopRuler />
        <div className="shrink-0">
          {tracks.map((t) => (
            <TrackRow key={t.num} t={t} />
          ))}
        </div>
        <div className="flex flex-1">
          <div className="relative flex w-[1661px] items-center justify-center bg-[#2d2d2d] bg-[repeating-linear-gradient(90deg,transparent_0,transparent_3.93px,#262626_3.93px,#262626_4.93px,transparent_4.93px,transparent_11.69px)]">
            <span className="text-[8px] font-bold text-[#e4e4e4]">Drop Files and Devices Here</span>
          </div>
          <div className="ml-[2px] flex-1 bg-[#353535]" />
        </div>
        <MainRow />
        <TimeRuler />
        {/* loop start and end lines running through the lanes */}
        <div className="absolute bottom-[17px] left-[14.5px] top-[37px] w-[1px] bg-[#777777]" />
        <div className="absolute bottom-[17px] left-[1627.5px] top-[37px] w-[1px] bg-[#c0c0c0]" />
      </div>
      {/* status bar */}
      <div className="flex h-[28px] items-center bg-[#1f1f1f] pb-[2px] pl-[9px]">
        <div className="flex h-[12px] w-[12px] items-center justify-center rounded-full bg-[#444444] text-[9px] font-bold leading-none text-[#1f1f1f]">i</div>
        <div className="ml-[12px] flex h-[16px] w-[1586px] items-center rounded-l-[2px] bg-[#e86a42] pl-[5px] text-[9px] leading-none text-[#3a1408]">
          Insert Mark 101.1.1 (Time: 3:10:476)
        </div>
        <div className="ml-[2px] flex h-[16px] w-[180px] items-center rounded-r-[2px] bg-[#2a2a2a] pl-[9px]">
          <svg width="5" height="6" viewBox="0 0 5 6"><path d="M0 0l5 3-5 3z" fill="#c0c0c0" /></svg>
        </div>
        <div className="ml-[8px] flex h-[16px] w-[16px] items-center justify-center rounded-l-[2px] bg-[#2a2a2a]">
          <svg width="6" height="6" viewBox="0 0 6 6"><path d="M0 0l6 3-6 3z" fill="#c0c0c0" /></svg>
        </div>
        <div className="flex h-[16px] w-[49px] items-center justify-center rounded-r-[2px] bg-[#2e2e2e] text-[9px] font-bold leading-none text-[#c0c0c0]">35 GRP FX</div>
        <svg width="12" height="12" viewBox="0 0 12 12" className="ml-[13px]"><path d="M1 5v6M4 2v9M7 4v7M10 6v5" stroke="#4a4a4a" strokeWidth="1.5" /></svg>
        <svg width="6" height="4" viewBox="0 0 6 4" className="ml-[7px]"><path d="M0 0h6L3 4z" fill="#4a4a4a" /></svg>
      </div>
    </div>
  )
}
